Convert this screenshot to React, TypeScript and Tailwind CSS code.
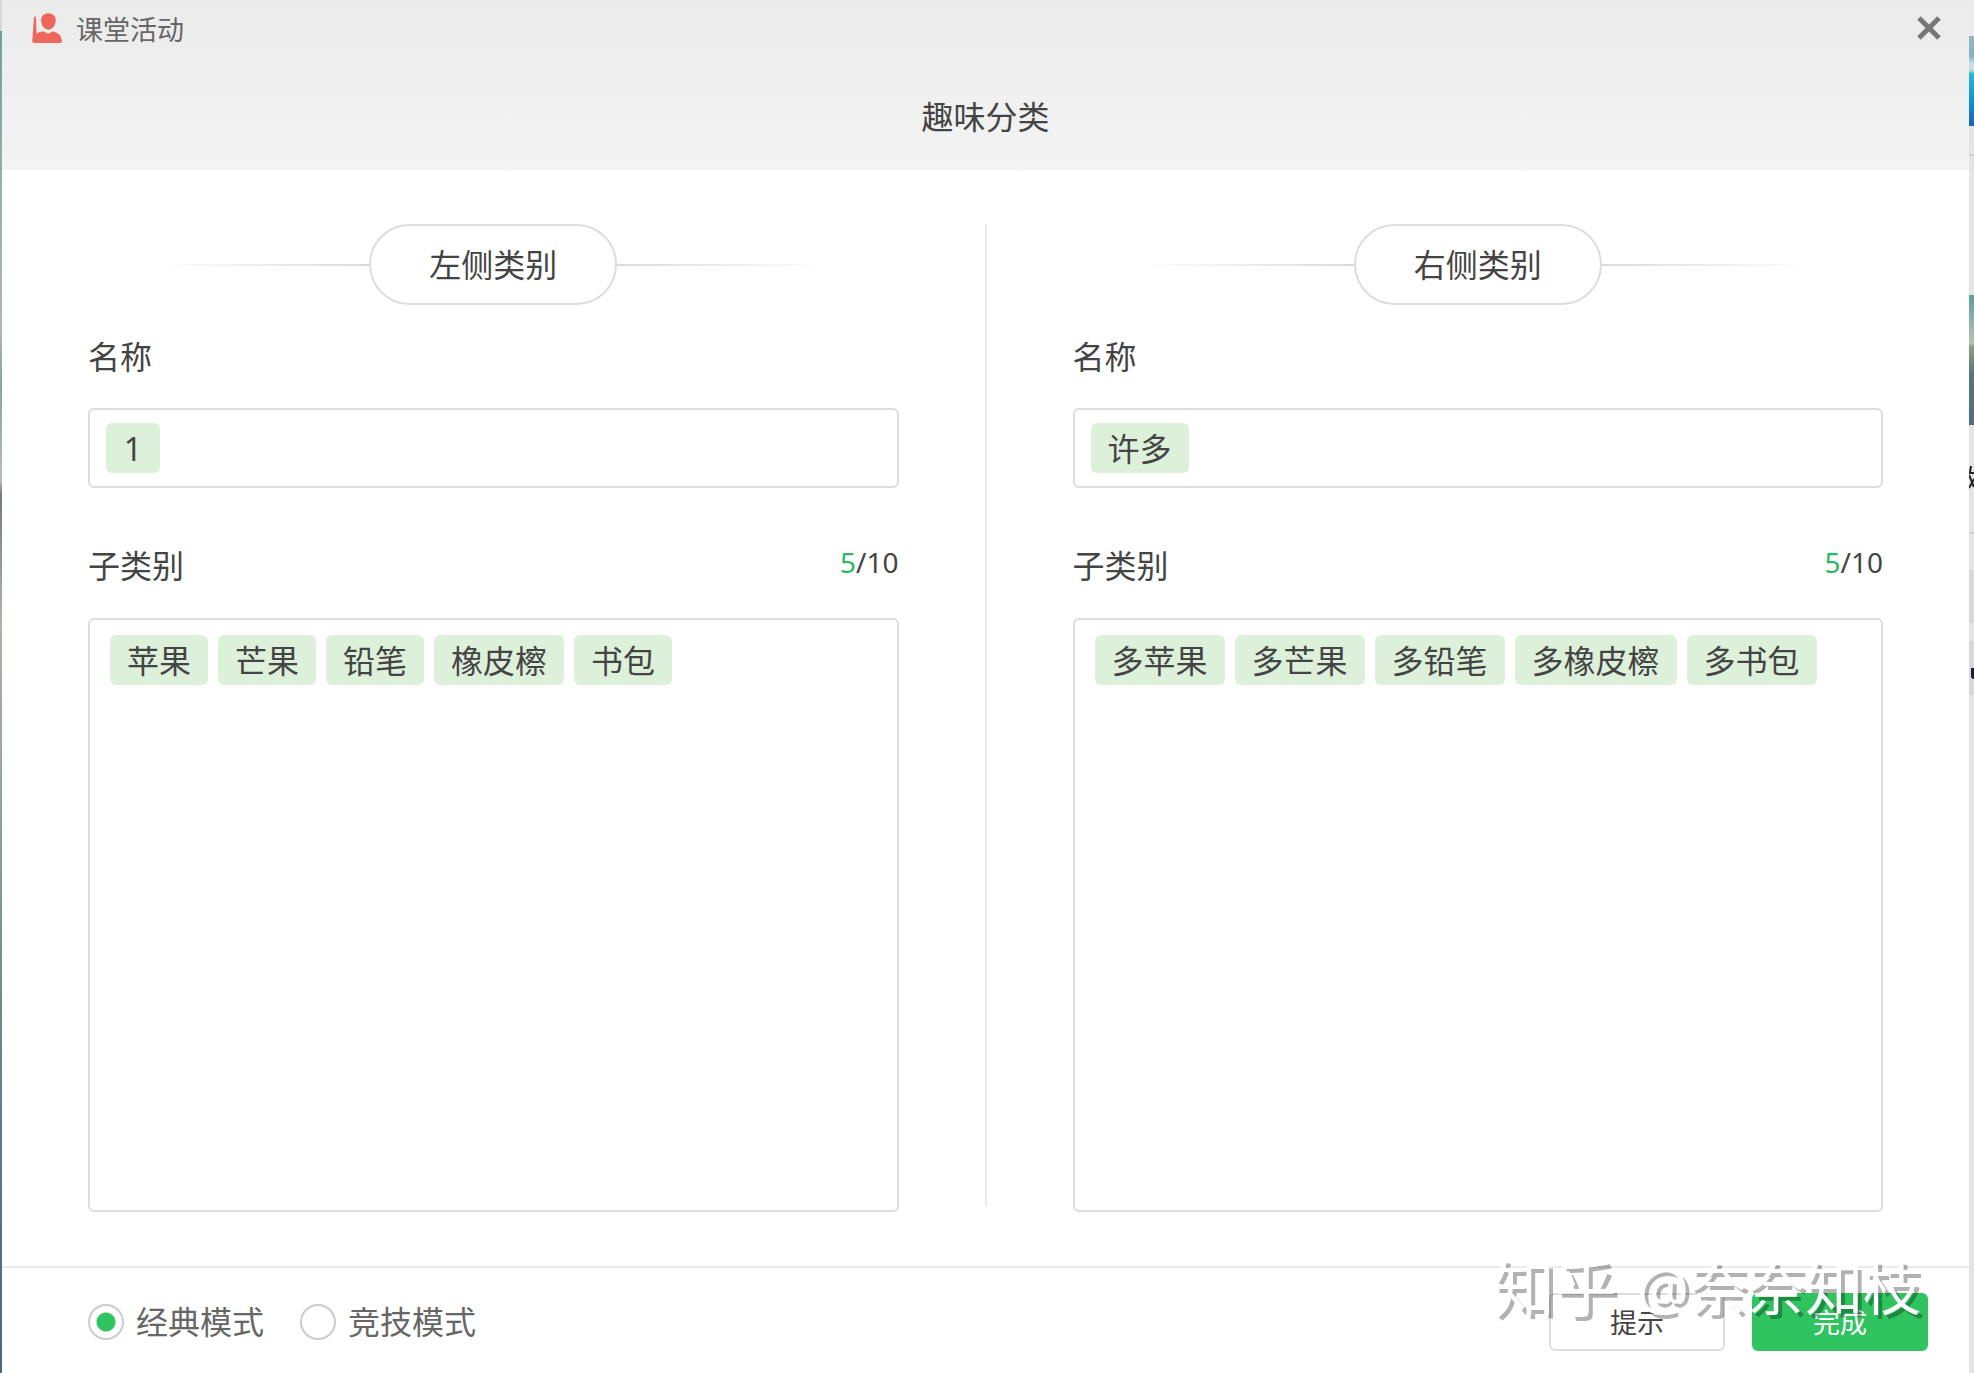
import { useState } from 'react'

const categories = [
  {
    id: 'left',
    title: '左侧类别',
    name: '1',
    items: ['苹果', '芒果', '铅笔', '橡皮檫', '书包'],
  },
  {
    id: 'right',
    title: '右侧类别',
    name: '许多',
    items: ['多苹果', '多芒果', '多铅笔', '多橡皮檫', '多书包'],
  },
]

const modes = [
  { value: 'classic', label: '经典模式' },
  { value: 'arena', label: '竞技模式' },
]

const PersonIcon = () => (
  <svg viewBox="0 0 30 30" className="size-[30px]" fill="#ee675c" aria-hidden="true">
    <path d="M3 3.600C3.600 3.600 4 4.200 4 5L4.600 20.400C7.400 18.900 9.800 18.500 12.200 18.600c2.600 2.400 5.600 2.400 8 0 5.400.6 9.200 3.800 9.800 9.400 0 1.300-.6 2-1.900 2H2.400C.9 30 .2 29.200.3 28L1.900 5c.1-.9.500-1.400 1.100-1.400z" />
    <path d="M16.400.2c4.600 0 7.300 2.900 7.300 7.100 0 4.900-3.200 9.400-7.300 9.400S9.100 12.200 9.100 7.300C9.100 3.100 11.800.2 16.400.2z" />
  </svg>
)

const CloseIcon = () => (
  <svg viewBox="0 0 24 24" className="size-6" stroke="#777777" strokeWidth="5" fill="none" aria-hidden="true">
    <path d="M2 2 22 22M22 2 2 22" />
  </svg>
)

const Tag = ({ text }: { text: string }) => (
  <span className="min-w-[54px] rounded-md bg-[#ddf1da] px-[17px] pt-0.5 text-center text-[32px] leading-[48px]">
    {text}
  </span>
)

const CategoryPanel = ({ category }: { category: (typeof categories)[number] }) => (
  <section className="flex flex-1 flex-col px-[86px]">
    <div className="flex items-center justify-center px-[72px]">
      <div className="h-0.5 flex-1 bg-linear-to-r from-transparent to-[#d9d9d9]" />
      <h2 className="rounded-full border-2 border-[#dddddd] px-[58px] text-[32px] leading-[77px]">
        {category.title}
      </h2>
      <div className="h-0.5 flex-1 bg-linear-to-l from-transparent to-[#d9d9d9]" />
    </div>

    <h3 id={`${category.id}-name`} className="mt-8 text-[32px] leading-10">名称</h3>
    <div
      role="group"
      aria-labelledby={`${category.id}-name`}
      className="mt-[31px] flex rounded-md border-2 border-[#dddddd] px-4 py-[13px]"
    >
      <Tag text={category.name} />
    </div>

    <div className="mt-[58px] flex items-start justify-between">
      <h3 id={`${category.id}-items`} className="text-[32px] leading-10">子类别</h3>
      <p className="text-[28px] leading-8">
        <span className="text-[#2fb766]">{category.items.length}</span>/10
      </p>
    </div>
    <div
      role="group"
      aria-labelledby={`${category.id}-items`}
      className="mt-[32px] flex flex-1 flex-wrap content-start gap-2.5 rounded-md border-2 border-[#dddddd] px-5 py-[15px]"
    >
      {category.items.map((item) => (
        <Tag key={item} text={item} />
      ))}
    </div>
  </section>
)

export default function App() {
  const [mode, setMode] = useState('classic')

  return (
    <div className="flex min-h-screen bg-[#e4e4e4] font-['Noto_Sans','Noto_Sans_CJK_SC',sans-serif] text-[#444444]">
      <div className="w-0.5 bg-[linear-gradient(#d4d6d8_0,#d4d6d8_31px,#6f9f9f_31px,#90b0ac_12%,#a9b9b4_24%,#86a5a0_28%,#b1c1b4_35%,#6b7f85_36%,#a5b8a5_45%,#8fa69c_58%,#6f8d94_72%,#5a7590_86%,#4b6788_100%)]" />

      <div className="relative flex flex-1 flex-col bg-white">
        <header className="h-[170px] bg-linear-to-b from-[#ebebeb] to-[#f4f4f4]">
          <div className="flex h-14 items-center justify-between pr-7 pl-[30px]">
            <div className="flex items-center gap-[14px]">
              <PersonIcon />
              <span className="pt-1 text-[27px] text-[#666666]">课堂活动</span>
            </div>
            <button type="button" aria-label="关闭">
              <CloseIcon />
            </button>
          </div>
          <h1 className="mt-9 text-center text-[32px] leading-[50px]">趣味分类</h1>
        </header>

        <main className="flex flex-1 pt-[54px] pb-[54px]">
          <CategoryPanel category={categories[0]} />
          <div className="mb-1.5 w-0.5 bg-[#ebebeb]" />
          <CategoryPanel category={categories[1]} />
        </main>

        <footer className="flex h-[107px] items-center justify-between border-t-2 border-[#ebebeb] pt-0.5 pr-[41px] pl-[86px]">
          <div className="flex gap-9">
            {modes.map((m) => (
              <label key={m.value} className="flex items-center gap-3 text-[32px] text-[#666666]">
                <input
                  type="radio"
                  name="mode"
                  value={m.value}
                  checked={mode === m.value}
                  onChange={() => setMode(m.value)}
                  className="size-9 appearance-none rounded-full border-2 border-[#cccccc] bg-white checked:bg-[radial-gradient(circle,#2fc45f_9px,white_10px)]"
                />
                {m.label}
              </label>
            ))}
          </div>
          <div className="flex gap-[27px] text-[27px]">
            <button type="button" className="h-[58px] w-44 rounded-md border-2 border-[#dddddd] bg-white pt-1">
              提示
            </button>
            <button type="button" className="h-[58px] w-44 rounded-md bg-[#2fc45f] pt-1 text-white">
              完成
            </button>
          </div>
        </footer>

        <div className="pointer-events-none absolute right-12 bottom-[50px] flex gap-5 text-[58px] leading-[70px] text-white [text-shadow:4px_4px_0_rgba(0,0,0,0.3)]">
          <span className="text-[62px]">知乎</span>
          <span>@奈奈知枝</span>
        </div>
      </div>

      {/* sliver of the window behind */}
      <div className="flex w-[5px] flex-col">
        <div className="h-9 bg-[#ececec]" />
        <div className="h-[90px] bg-[linear-gradient(#9fb4bd_0,#7fb3c4_20px,#c8e2e6_28px,#bfe0e6_34px,#2cb5d6_38px,#1a8fd0_65px,#1a62b5_100%)]" />
        <div className="mt-7 h-0.5 bg-[#d2d2d2]" />
        <div className="mt-[139px] h-[130px] bg-[linear-gradient(#5f9f9a_0,#b5c4b4_48px,#8a9f82_52px,#56767a_80px,#4d6e86_100%)]" />
        <svg viewBox="0 0 5 24" className="mt-10 h-6 w-[5px]" fill="none" stroke="#222222" strokeWidth="2" aria-hidden="true">
          <path d="M2 1 1 7M0 8H5M0 10 5 22M5 14 0 23" />
        </svg>
        <div className="mt-[43px] h-0.5 bg-[#cfcfcf]" />
        <div className="mt-9 h-[53px] bg-[#d6d8de]" />
        <div className="mt-[18px] h-[54px] bg-[#d6d8de] pt-[27px]">
          <div className="ml-auto h-[11px] w-[3px] rounded-bl-sm bg-[#1c1c2c]" />
        </div>
      </div>
    </div>
  )
}
